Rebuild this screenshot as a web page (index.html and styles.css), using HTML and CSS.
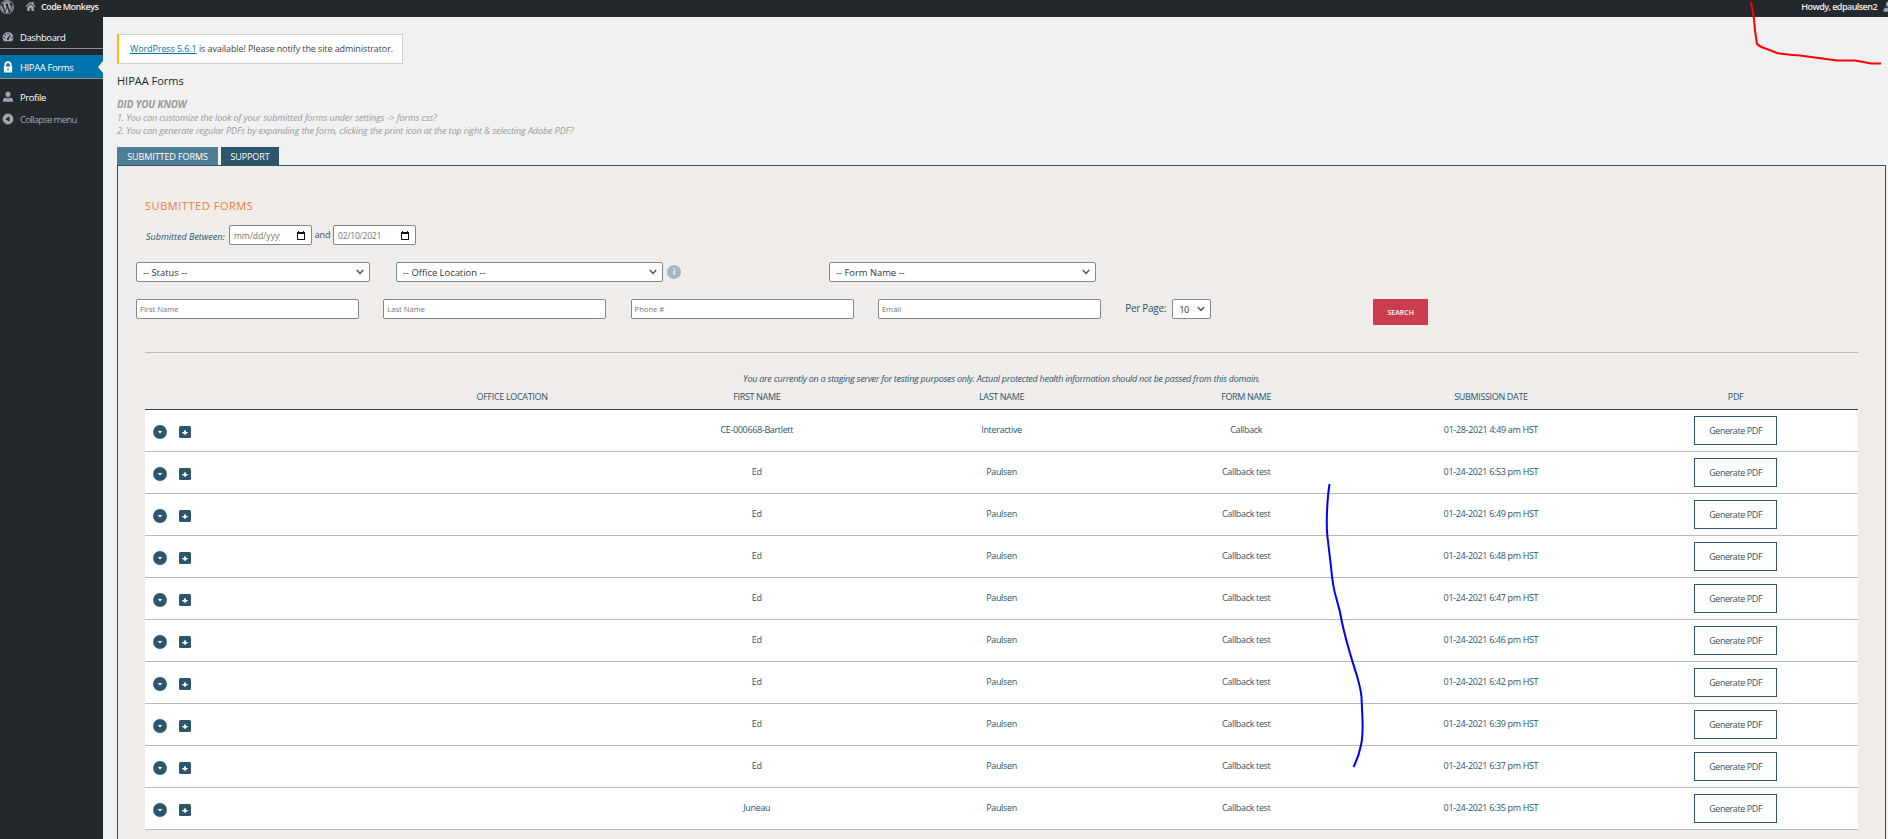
FILE: index.html
```html
<!DOCTYPE html>
<html lang="en">
<head>
<meta charset="utf-8">
<title>HIPAA Forms</title>
<link rel="stylesheet" href="styles.css">
</head>
<body>
<svg class="defs" width="0" height="0">
  <symbol id="person" viewBox="0 0 20 20"><path d="M10 1c2.6 0 4.3 2 4.3 4.600S12.400 10.500 10 10.500 5.700 8.200 5.700 5.600 7.400 1 10 1zM6 10.800c1.200 1 2.500 1.500 4 1.500s2.800-.5 4-1.500c3 .8 4.500 2.800 4.500 5.700V18h-17v-1.500c0-2.900 1.500-4.900 4.500-5.700z"/></symbol>
  <symbol id="cal" viewBox="0 0 8 9"><path d="M0 1h1V0h1v1h4V0h1v1h1v8H0zM1 3v5h6V3z" fill-rule="evenodd"/></symbol>
  <symbol id="chev" viewBox="0 0 10 10"><path d="M1.800 3 5 6.500 8.200 3" fill="none" stroke="#50575e" stroke-width="1.500"/></symbol>
  <symbol id="expand" viewBox="0 0 14 14"><circle cx="7" cy="7" r="6.900"/><path d="M4.800 6h4.400L7 8.400z" fill="#fff"/></symbol>
  <symbol id="archive" viewBox="0 0 12 12"><rect width="12" height="12" rx="1.500"/><path d="M5 4.500h2V6h2.300L6 9 2.700 6H5z" fill="#fff"/></symbol>
</svg>
<header class="bar">
  <svg class="wp" viewBox="0 0 20 20"><path fill-rule="evenodd" d="M10 0a10 10 0 1 1 0 20 10 10 0 0 1 0-20zm0 1a9 9 0 1 0 0 18 9 9 0 0 0 0-18z"/><path d="m2.300 7 4.200 10.700A8.200 8.200 0 0 1 2.300 7zM3.300 5.200A8.200 8.200 0 0 1 15.500 4c-1 .1-1.400.8-1.400 1.600 0 1.400 1.600 2 1.600 4.200 0 1-.4 2.200-.9 3.700l-.7 2-3-9.300 1.100-.1V5.500H6.900v.6l1.100.1 1.400 3.700-1.900 5.800-3.200-9.500 1.100-.1v-.6zM10.200 10.700l2.500 7a8.200 8.200 0 0 1-4.900.1zM17.300 6.200a8.200 8.200 0 0 1-3.200 10.800c1.400-4 3.400-7.500 3.200-10.800z"/></svg>
  <svg class="home" viewBox="0 0 20 20"><path d="M10 1 1 9.500 2.500 11 10 4l7.500 7L19 9.500l-3-2.800V2h-3v1.900zM10 5.700l-6 5.600V18h4.300v-5h3.400v5H16v-6.700z"/></svg>
  <span class="site">Code Monkeys</span>
  <span class="howdy">Howdy, edpaulsen2</span>
  <svg class="avatar"><use href="#person"/></svg>
</header>
<div class="shell">
  <nav class="side">
    <div class="item dash"><svg viewBox="0 0 20 20"><path fill-rule="evenodd" d="M3.500 17A9 9 0 1 1 16.500 17zM9 3.500v2h2v-2zM4.500 5.500v2h2v-2zM13.300 6 9.500 11.500a1.800 1.800 0 1 0 2.200 1.200l2.800-6zM2.500 10v2h2v-2zM15.500 10v2h2v-2z"/></svg><span>Dashboard</span></div>
    <div class="item active"><svg viewBox="0 0 20 20"><path fill-rule="evenodd" d="M4 9V6.500a6 6 0 0 1 12 0V9h1v10H3V9zm3 0h6V6.500a3 3 0 0 0-6 0zM9 12v4h2v-4z"/></svg><span>HIPAA Forms</span></div>
    <div class="item prof"><svg><use href="#person"/></svg><span>Profile</span></div>
    <div class="item coll"><svg viewBox="0 0 20 20"><path fill-rule="evenodd" d="M10 1a9 9 0 1 1 0 18 9 9 0 0 1 0-18zm2.500 4.500L5.500 10l7 4.500z"/></svg><span>Collapse menu</span></div>
  </nav>
  <main class="main">
    <div class="notice"><span><a>WordPress 5.6.1</a> is available! Please notify the site administrator.</span></div>
    <h1><span>HIPAA Forms</span></h1>
    <div class="know"><b>DID YOU KNOW</b><p><span>1. You can customize the look of your submitted forms under settings -&gt; forms css?</span></p><p><span>2. You can generate regular PDFs by expanding the form, clicking the print icon at the top right &amp; selecting Adobe PDF?</span></p></div>
    <div class="tabs"><div class="tab on"><span>SUBMITTED FORMS</span></div><div class="tab"><span>SUPPORT</span></div></div>
    <section class="panel">
      <h2><span>SUBMITTED FORMS</span></h2>
      <div class="dates"><em>Submitted Between:</em><div class="field date"><span class="clip">mm/dd/yyyy</span><svg><use href="#cal"/></svg></div><span class="and">and</span><div class="field date"><span>02/10/2021</span><svg><use href="#cal"/></svg></div></div>
      <div class="selects">
        <div class="field select status"><span>-- Status --</span><svg><use href="#chev"/></svg></div>
        <div class="field select office"><span>-- Office Location --</span><svg><use href="#chev"/></svg></div>
        <div class="info">i</div>
        <div class="field select form"><span>-- Form Name --</span><svg><use href="#chev"/></svg></div>
      </div>
      <div class="inputs">
        <div class="field text"><span>First Name</span></div><div class="field text"><span>Last Name</span></div><div class="field text"><span>Phone #</span></div><div class="field text"><span>Email</span></div>
        <span class="per">Per Page:</span>
        <div class="field select num"><span>10</span><svg><use href="#chev"/></svg></div>
        <div class="search"><span>SEARCH</span></div>
      </div>
      <div class="results">
        <div class="staging"><span>You are currently on a staging server for testing purposes only. Actual protected health information should not be passed from this domain.</span></div>
        <div class="row head"><div></div><div><span>OFFICE LOCATION</span></div><div><span>FIRST NAME</span></div><div><span>LAST NAME</span></div><div><span>FORM NAME</span></div><div><span>SUBMISSION DATE</span></div><div><span>PDF</span></div></div>
        <div id="rows"></div>
      </div>
    </section>
  </main>
</div>
<svg class="ink" width="1888" height="839"><path stroke="#f00" d="M1751 2 1754 19 1755 31 1757 44Q1760 47 1767 49L1777 53Q1781 54 1800 55.500L1837 60.500H1855Q1864 62 1871 63.500H1881"/><path stroke="#00f" d="M1329.500 484C1327 500 1326 525 1327.500 537L1331 567Q1333 588 1336 597L1340 612C1344 636 1352 660 1357 676Q1361 690 1361.500 697L1362.500 720Q1363 737 1361 745 1359 756 1353.500 767"/></svg>
<script src="script.js"></script>
</body>
</html>
```
FILE: script.js
```js
const entries = [
  ["CE-000668-Bartlett", "Interactive", "Callback", "01-28-2021 4:49 am HST"],
  ["Ed", "Paulsen", "Callback test", "01-24-2021 6:53 pm HST"],
  ["Ed", "Paulsen", "Callback test", "01-24-2021 6:49 pm HST"],
  ["Ed", "Paulsen", "Callback test", "01-24-2021 6:48 pm HST"],
  ["Ed", "Paulsen", "Callback test", "01-24-2021 6:47 pm HST"],
  ["Ed", "Paulsen", "Callback test", "01-24-2021 6:46 pm HST"],
  ["Ed", "Paulsen", "Callback test", "01-24-2021 6:42 pm HST"],
  ["Ed", "Paulsen", "Callback test", "01-24-2021 6:39 pm HST"],
  ["Ed", "Paulsen", "Callback test", "01-24-2021 6:37 pm HST"],
  ["Juneau", "Paulsen", "Callback test", "01-24-2021 6:35 pm HST"]
];
document.getElementById("rows").innerHTML = entries.map(cells =>
  '<div class="row"><div class="acts"><svg class="ex"><use href="#expand"/></svg><svg class="ar"><use href="#archive"/></svg></div><div></div>' +
  cells.map(c => '<div class="cell"><span>' + c + '</span></div>').join("") +
  '<div><div class="gen"><span>Generate PDF</span></div></div></div>').join("");
```
FILE: styles.css
```css
* { box-sizing: border-box; }
body { margin: 0; width: 1888px; height: 839px; overflow: hidden; background: #f1f1f1; color: #2d566c; font-family: "Open Sans", "Noto Sans", sans-serif; font-size: 9px; position: relative; }
.defs { position: absolute; }
svg { display: block; flex: none; }
span, em, b { white-space: nowrap; }
.bar { height: 17px; background: #23282d; color: #eee; display: flex; align-items: center; fill: #a0a5aa; padding-bottom: 4px; overflow: hidden; }
.wp { width: 14px; height: 14px; }
.home { width: 11px; height: 11px; margin-left: 11px; }
.site { margin-left: 5px; font-weight: 600; letter-spacing: -.5px; }
.howdy { margin-left: auto; font-weight: 600; letter-spacing: -.55px; }
.avatar { width: 13px; height: 12px; margin-left: 5px; margin-right: -7px; }
.shell { display: flex; height: 822px; }
.side { width: 103px; background: #23282d; color: #fff; fill: #a0a5aa; }
.item { display: flex; align-items: center; font-size: 9.500px; letter-spacing: -.4px; padding-left: 2px; height: 23px; font-weight: 500; }
.item svg { width: 12px; height: 12px; margin-right: 6px; }
.dash { height: 32px; padding-top: 9px; border-bottom: 1px solid #8c8f94; margin-bottom: 6px; }
.active { height: 24px; background: #0073aa; border-bottom: 1px solid #8c8f94; padding-top: 1px; fill: #fff; position: relative; }
.active::after { content: ""; position: absolute; right: 0; top: 6px; border: 6px solid transparent; border-right: 5px solid #f1f1f1; border-left: 0; }
.prof { margin-top: 7px; height: 22px; }
.coll { height: 22px; color: #a0a5aa; font-weight: 400; letter-spacing: -.7px; }
.main { flex: 1; padding: 17px 0 0 14px; display: flex; flex-direction: column; }
.notice { width: 286px; height: 30px; background: #fff; border: 1px solid #ccd0d4; border-left: 2px solid #ffb900; display: flex; align-items: center; padding: 0 0 2px 11px; color: #444; letter-spacing: -.1px; }
.notice a { color: #0073aa; text-decoration: underline; }
h1 { font-size: 11px; font-weight: 400; color: #23282d; margin: 0; height: 34px; padding-bottom: 2px; display: flex; align-items: center; }
.know { color: #999; font-style: italic; line-height: 13px; height: 49px; letter-spacing: -.1px; }
.know p { margin: 0; height: 13px; }
.know b { display: block; width: max-content; font-size: 9.900px; }
.tabs { display: flex; gap: 3px; height: 18px; }
.tab { width: 58px; background: #2d566c; color: #fff; display: flex; align-items: center; justify-content: center; letter-spacing: -.1px; }
.tab.on { width: 101px; background: #4f7d95; }
.panel { width: 1769px; flex: 1; border: 1px solid #2d566c; border-bottom: 0; background: #f0ece9; padding: 30px 27px 0 18px; }
h2 { margin: 0 0 0 9px; height: 18px; font-size: 11px; font-weight: 400; letter-spacing: .55px; color: #f57b42; display: flex; align-items: center; }
.dates { display: flex; align-items: center; height: 20px; margin-top: 11px; padding-left: 10px; }
.dates em { width: 83px; padding-top: 2px; }
.field { height: 20px; border: 1px solid #7e8993; border-radius: 2px; background: #fff; display: flex; align-items: center; justify-content: space-between; }
.date { width: 83px; padding: 0 6px 0 4px; color: #757575; font-size: 8.500px; letter-spacing: -.2px; }
.date svg { width: 8px; height: 9px; fill: #111; }
.clip { width: 46px; overflow: hidden; letter-spacing: 0; }
.and { width: 21px; text-align: center; padding-bottom: 2px; letter-spacing: -.2px; }
.selects { display: flex; margin-top: 17px; align-items: center; }
.select { color: #32373c; padding: 0 4px 0 6px; font-size: 9.400px; }
.select svg { width: 10px; height: 10px; }
.status { width: 234px; margin-right: 26px; }
.office { width: 267px; }
.form { width: 267px; }
.info { width: 14px; height: 14px; border-radius: 50%; background: #a2b8c4; color: #eef2f4; font-weight: 700; font-size: 9px; line-height: 14px; text-align: center; margin: 0 148px 0 4px; }
.inputs { display: flex; margin-top: 17px; height: 53px; }
.text { width: 223px; margin-right: 24.300px; color: #757575; padding-left: 3px; font-size: 7.600px; }
.per { width: 47px; line-height: 18px; font-size: 10px; letter-spacing: -.3px; }
.num { width: 39px; }
.num span { letter-spacing: -.5px; }
.search { margin-left: 162px; width: 55px; height: 26px; background: #cb3d4e; color: #fff; font-size: 7px; font-weight: 600; display: flex; align-items: center; justify-content: center; }
.results { margin-left: 9px; border-top: 1px solid #b7b9ba; width: 1713px; }
.staging { height: 36px; padding-top: 17px; line-height: 18px; text-align: center; font-style: italic; letter-spacing: -.26px; }
.row { display: grid; grid-template-columns: repeat(7, 1fr); height: 42px; background: #fff; border-bottom: 1px solid #b7b9ba; align-items: center; text-align: center; letter-spacing: -.34px; }
.row.head { height: 21px; padding-bottom: 6px; background: none; border-bottom-color: #3a3e40; }
.cell { padding-bottom: 2px; }
.acts { display: flex; align-items: center; padding: 3px 0 0 8px; fill: #2d566c; }
.ex { width: 14px; height: 14px; }
.ar { width: 12px; height: 12px; margin-left: 12px; }
.gen { width: 83px; height: 29px; border: 1px solid #2d566c; margin: auto; padding-bottom: 1px; letter-spacing: -.42px; display: flex; align-items: center; justify-content: center; }
.ink { position: absolute; left: 0; top: 0; fill: none; stroke-width: 2; pointer-events: none; }
```
